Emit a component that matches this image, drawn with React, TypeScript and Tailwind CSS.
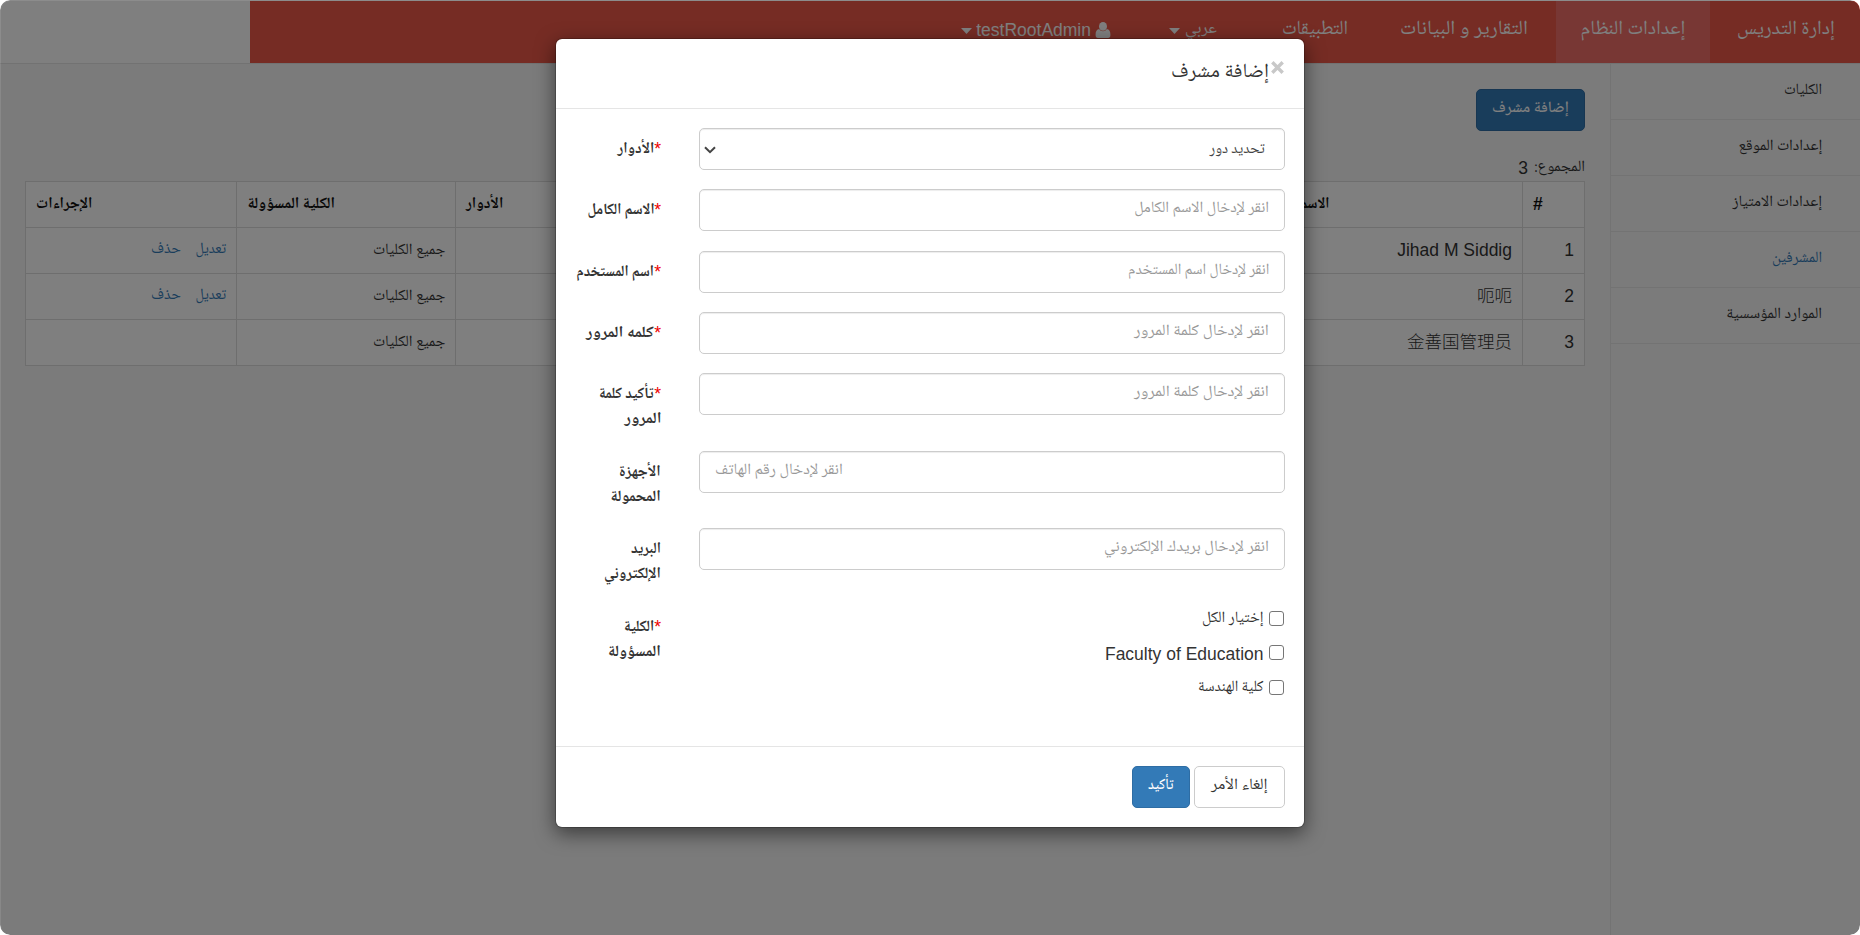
import { useLayoutEffect, useRef, useState } from "react";
import type { ReactNode } from "react";

/** Arabic run that is condensed or stretched to a given width. */
function Ar({ children, w, className = "" }: { children: string; w: number; className?: string }) {
  const ref = useRef<HTMLSpanElement>(null);
  const [scale, setScale] = useState(1);
  useLayoutEffect(() => {
    if (ref.current) setScale(w / ref.current.offsetWidth);
  }, [w]);
  return (
    <span className="inline-flex justify-start" style={{ width: w }} dir="rtl">
      <span
        ref={ref}
        className={`inline-block shrink-0 origin-right whitespace-nowrap font-['Noto_Naskh_Arabic','DejaVu_Sans_Condensed',sans-serif] ${className}`}
        style={{ transform: `scaleX(${scale})` }}
      >
        {children}
      </span>
    </span>
  );
}

function Caret({ className = "" }: { className?: string }) {
  return (
    <svg viewBox="0 0 11 6" className={`h-[6px] w-[11px] fill-current ${className}`}>
      <path d="M0 0h11L5.5 6z" />
    </svg>
  );
}

function UserIcon() {
  return (
    <svg viewBox="0 0 16 16" className="h-[16px] w-[16px] fill-current">
      <ellipse cx="8" cy="4.4" rx="4" ry="4.4" />
      <path d="M4.2 7C1.8 7.4.6 9.300.6 12.200V13.600C.6 15 1.500 16 2.900 16H13.100C14.500 16 15.400 15 15.400 13.600V12.200C15.400 9.300 14.200 7.400 11.800 7C10.800 8.500 9.500 9.200 8 9.200S5.200 8.500 4.200 7Z" />
    </svg>
  );
}

const sidebar: { text: string; w: number; active?: boolean }[] = [
  { text: "الكليات", w: 38 },
  { text: "إعدادات الموقع", w: 83.5 },
  { text: "إعدادات الامتياز", w: 90 },
  { text: "المشرفين", w: 50, active: true },
  { text: "الموارد المؤسسية", w: 96 },
];

const people = [
  { name: "Jihad M Siddig", actions: true },
  { name: "呃呃", actions: true },
  { name: "金善国管理员", actions: false },
];

function TopBar() {
  return (
    <header className="flex h-[64px] border-b border-[#e4e4e4] bg-white pt-px">
      <nav className="flex w-[1610px] shrink-0 bg-[#ec5848] text-[20px] leading-[52px] text-white">
        <div className="w-[150px] pr-[25px]">
          <Ar w={98}>إدارة التدريس</Ar>
        </div>
        <div className="w-[154px] bg-[#f06e68] pr-[25px]">
          <Ar w={104.5}>إعدادات النظام</Ar>
        </div>
        <div className="w-[181px] pr-[28px]">
          <Ar w={128}>التقارير و البيانات</Ar>
        </div>
        <div className="w-[130px] pr-[27px]">
          <Ar w={66}>التطبيقات</Ar>
        </div>
        <div className="flex w-[105px] pr-[28px] text-[17.5px] leading-[57px]">
          <Ar w={32}>عربي</Ar>
          <Caret className="mr-[5px] mt-[27px]" />
        </div>
        <div className="flex pr-[29px] text-[17.5px] leading-[57px]">
          <div className="pt-[21px]">
            <UserIcon />
          </div>
          <span className="mr-[4px] w-[115px] leading-[58px]">testRootAdmin</span>
          <Caret className="mr-[4px] mt-[27px]" />
        </div>
      </nav>
    </header>
  );
}

function Sidebar() {
  return (
    <aside className="w-[250px] shrink-0 border-l border-[#e6e6e6]">
      {sidebar.map((s) => (
        <div
          key={s.text}
          className={`h-[56px] border-b border-[#e6e6e6] pr-[38px] text-[15.8px] leading-[50px] ${s.active ? "text-[#337ab7]" : "text-[#333]"}`}
        >
          <Ar w={s.w}>{s.text}</Ar>
        </div>
      ))}
    </aside>
  );
}

const td = "h-[46px] border border-[#dcdcdc] px-[10px] align-middle";
const tdAr = `${td} pb-[2px]`;

function People() {
  return (
    <main className="flex grow flex-col px-[25px] pt-[25px]">
      <div className="flex h-[42px] w-[109px] justify-center rounded-[5px] border border-[#2e6da4] bg-[#337ab7] text-[15.8px] font-medium leading-[38px] text-white">
        <Ar w={77}>إضافة مشرف</Ar>
      </div>
      <div className="mt-[23px] flex h-[27px] text-[15.8px] leading-[27px]">
        <Ar w={51}>المجموع:</Ar>
        <span className="mr-[6px] text-[17.5px] leading-[28px]">3</span>
      </div>
      <table className="w-[1559px] table-fixed border-collapse bg-white text-[15.8px] text-[#333]">
        <colgroup>
          <col className="w-[62px]" />
          <col className="w-[272px]" />
          <col className="w-[290px]" />
          <col className="w-[505px]" />
          <col className="w-[219px]" />
          <col className="w-[211px]" />
        </colgroup>
        <thead>
          <tr className="text-left text-[#111]">
            <th className={`${td} text-[17.5px]`}>#</th>
            <th className={tdAr}>
              <Ar w={68}>الاسم الكامل</Ar>
            </th>
            <th className={td} />
            <th className={tdAr}>
              <Ar w={37}>الأدوار</Ar>
            </th>
            <th className={tdAr}>
              <Ar w={88}>الكلية المسؤولة</Ar>
            </th>
            <th className={tdAr}>
              <Ar w={56}>الإجراءات</Ar>
            </th>
          </tr>
        </thead>
        <tbody>
          {people.map((p, i) => (
            <tr key={p.name}>
              <td className={`${td} text-[17.5px]`}>{i + 1}</td>
              <td className={`${td} text-[17.5px] font-light`}>{p.name}</td>
              <td className={td} />
              <td className={td} />
              <td className={tdAr}>
                <Ar w={72}>جميع الكليات</Ar>
              </td>
              <td className={tdAr}>
                {p.actions && (
                  <div className="flex gap-[14.5px] text-[#337ab7]">
                    <Ar w={30.5}>تعديل</Ar>
                    <Ar w={30}>حذف</Ar>
                  </div>
                )}
              </td>
            </tr>
          ))}
        </tbody>
      </table>
    </main>
  );
}

type Line = [string, number];

function Row({ lines, required, children }: { lines: Line[]; required?: boolean; children: ReactNode }) {
  return (
    <div className={`mb-[18.75px] flex justify-between ${lines.length > 1 ? "h-[58.75px]" : "h-[42.5px]"}`}>
      <div className="w-[586px]">{children}</div>
      <div className="flex w-[87px] flex-col pt-[9px] text-[15.8px] font-bold leading-[25px] text-[#333]">
        {lines.map(([t, w], i) => (
          <div key={t} className="flex h-[25px] whitespace-nowrap">
            {i === 0 && required && (
              <span className="w-[7px] text-[17.5px] font-normal leading-[25px] text-[#e00]">*</span>
            )}
            <Ar w={w}>{t}</Ar>
          </div>
        ))}
      </div>
    </div>
  );
}

const box =
  "flex h-[42px] w-full rounded-[5px] border border-[#ccc] bg-white px-[15px] text-[15.8px] leading-[38px] shadow-[inset_0_1px_1px_rgba(0,0,0,0.075)]";

function Field({ text, w, end }: { text: string; w: number; end?: boolean }) {
  return (
    <div className={`${box} text-[#999] ${end ? "justify-end" : ""}`}>
      <Ar w={w}>{text}</Ar>
    </div>
  );
}

function Check({ children }: { children: ReactNode }) {
  return (
    <div className="flex h-[34.5px] items-start">
      <span className="ml-[5.5px] mr-px mt-[5px] h-[15px] w-[15px] rounded-[3px] border border-[#767676] bg-white" />
      {children}
    </div>
  );
}

function Modal() {
  return (
    <div className="flex h-[790px] w-[750px] flex-col rounded-[7px] border border-black/20 bg-white bg-clip-padding shadow-[0_6px_19px_rgba(0,0,0,0.5)]">
      <div className="flex h-[70px] border-b border-[#e5e5e5] px-[19px] pt-[18px] text-[#333]">
        <svg viewBox="0 0 13 13" className="ml-[2px] mr-[1px] mt-[4px] h-[13px] w-[13px] stroke-[#c8c8c8]">
          <path d="M1.300 1.300 11.700 11.700M11.700 1.300 1.300 11.700" strokeWidth="3.400" />
        </svg>
        <div className="text-[20px] leading-[26px]">
          <Ar w={98}>إضافة مشرف</Ar>
        </div>
      </div>
      <div className="flex h-[637px] flex-col pl-[18px] pr-[19px] pt-[19px]">
        <Row lines={[["الأدوار", 36.5]]} required>
          <div className={`${box} items-start justify-between text-[#444]`}>
            <div className="pr-[4px]">
              <Ar w={55.5}>تحديد دور</Ar>
            </div>
            <svg viewBox="0 0 12 8" className="-ml-[11px] mt-[17px] h-[8px] w-[12px] fill-none stroke-[#444]">
              <path d="M1 1.200 6 6.200 11 1.200" strokeWidth="2" />
            </svg>
          </div>
        </Row>
        <Row lines={[["الاسم الكامل", 67.5]]} required>
          <Field text="انقر لإدخال الاسم الكامل" w={135} />
        </Row>
        <Row lines={[["اسم المستخدم", 77.5]]} required>
          <Field text="انقر لإدخال اسم المستخدم" w={141} />
        </Row>
        <Row lines={[["كلمه المرور", 68]]} required>
          <Field text="انقر لإدخال كلمة المرور" w={135} />
        </Row>
        <Row lines={[["تأكيد كلمة", 55], ["المرور", 37.5]]} required>
          <Field text="انقر لإدخال كلمة المرور" w={135} />
        </Row>
        <Row lines={[["الأجهزة", 42], ["المحمولة", 50.5]]}>
          <Field text="انقر لإدخال رقم الهاتف" w={128} end />
        </Row>
        <Row lines={[["البريد", 30], ["الإلكتروني", 57]]}>
          <Field text="انقر لإدخال بريدك الإلكتروني" w={165} />
        </Row>
        <Row lines={[["الكلية", 30], ["المسؤولة", 53]]} required>
          <div className="flex flex-col text-[15.8px] leading-[26px] text-[#333]">
            <Check>
              <Ar w={61}>إختيار الكل</Ar>
            </Check>
            <Check>
              <span className="whitespace-nowrap text-[17.5px] leading-[28px]">Faculty of Education</span>
            </Check>
            <Check>
              <Ar w={66}>كلية الهندسة</Ar>
            </Check>
          </div>
        </Row>
      </div>
      <div className="flex grow gap-[4px] border-t border-[#e5e5e5] pr-[19px] pt-[19px] text-[15.8px] leading-[38px]">
        <div className="flex h-[42px] w-[91px] justify-center rounded-[5px] border border-[#ccc] text-[#333]">
          <Ar w={57}>إلغاء الأمر</Ar>
        </div>
        <div className="flex h-[42px] w-[58px] justify-center rounded-[5px] border border-[#2e6da4] bg-[#337ab7] font-medium text-white">
          <Ar w={26}>تأكيد</Ar>
        </div>
      </div>
    </div>
  );
}

export default function App() {
  return (
    <div
      dir="rtl"
      className="relative h-[935px] w-[1860px] overflow-hidden rounded-[10px] bg-[#f7f7f7] font-['Liberation_Sans','Noto_Sans_CJK_SC',sans-serif] text-[#333]"
    >
      <TopBar />
      <div className="flex h-[871px]">
        <Sidebar />
        <People />
      </div>
      <div className="absolute inset-0 flex items-start justify-center rounded-[10px] border-l border-t border-white/10 bg-black/50 pr-px pt-[37px]">
        <Modal />
      </div>
    </div>
  );
}
